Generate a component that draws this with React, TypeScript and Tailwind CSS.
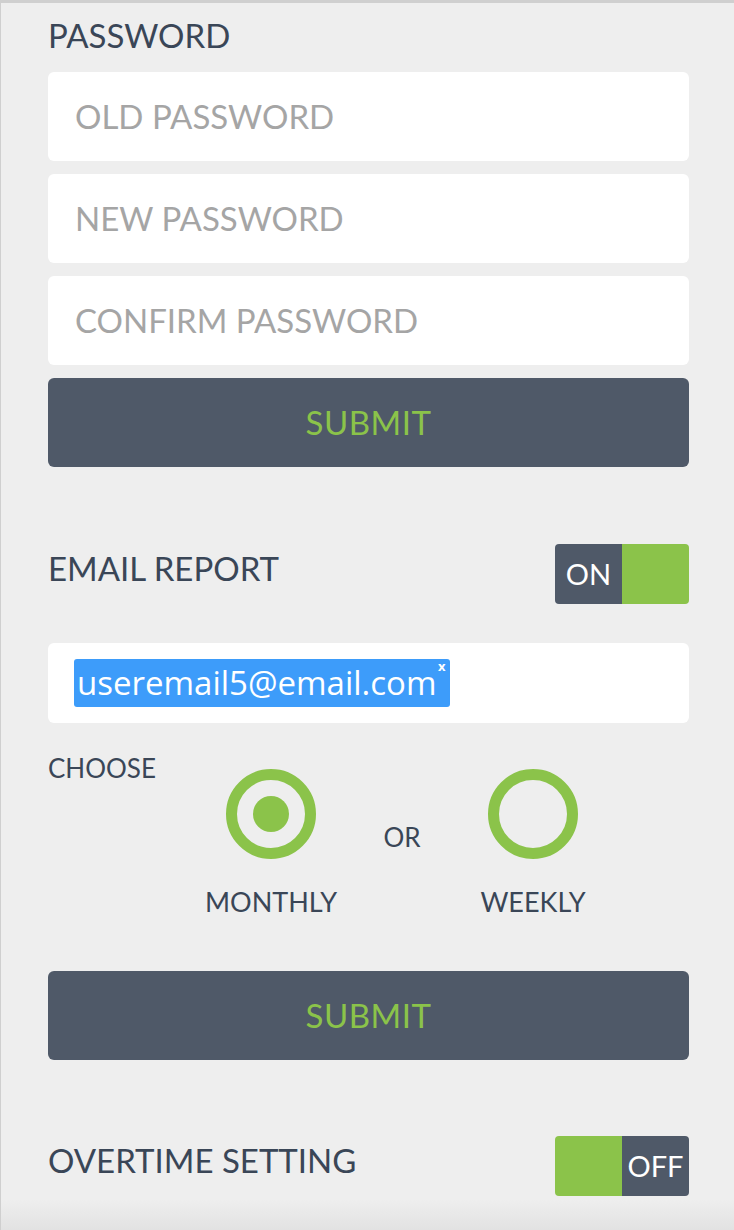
const label = "font-['Lato','Open_Sans',sans-serif] text-[#3a4657] uppercase";

function Toggle({ on }: { on: boolean }) {
  return (
    <div className="flex h-[60px] w-[134px] overflow-hidden rounded-[4px]">
      {on ? (
        <>
          <div className="flex w-1/2 items-center justify-center bg-[#4f5968] font-['Lato',sans-serif] text-[29px] text-white">
            ON
          </div>
          <div className="w-1/2 bg-[#8bc34a]" />
        </>
      ) : (
        <>
          <div className="w-1/2 bg-[#8bc34a]" />
          <div className="flex w-1/2 items-center justify-center bg-[#4f5968] font-['Lato',sans-serif] text-[29px] text-white">
            OFF
          </div>
        </>
      )}
    </div>
  );
}

function Radio({ checked, text }: { checked: boolean; text: string }) {
  return (
    <div className="flex w-[186px] flex-col items-center">
      <div className="flex h-[90px] w-[90px] items-center justify-center rounded-full border-[11px] border-[#8bc34a]">
        {checked && <div className="h-[36px] w-[36px] rounded-full bg-[#8bc34a]" />}
      </div>
      <div className={`${label} mt-[26px] text-[27px] leading-[34px]`}>{text}</div>
    </div>
  );
}

function Submit() {
  return (
    <button className="flex h-[89px] w-full items-center justify-center rounded-[6px] bg-[#4f5968] font-['Lato',sans-serif] text-[33px] tracking-[0.5px] text-[#8bc34a]">
      SUBMIT
    </button>
  );
}

export default function App() {
  const fields = ["Old password", "New password", "Confirm password"];

  return (
    <div className="flex min-h-[1230px] w-full flex-col border-t-[3px] border-l border-[#cfcfcf] bg-[#eeeeee]">
      <div className="pl-[47px] pr-[45px]">
        {/* Password */}
        <div className={`${label} mt-[12px] h-[40px] text-[33px] leading-[40px]`}>Password</div>
        <div className="mt-[17px] flex flex-col gap-[13px]">
          {fields.map((f) => (
            <div
              key={f}
              className="flex h-[89px] items-center rounded-[6px] bg-white px-[27px] font-['Lato',sans-serif] text-[33px] uppercase text-[#a5a5a5]"
            >
              {f}
            </div>
          ))}
          <Submit />
        </div>

        {/* Email report */}
        <div className="mt-[77px] flex items-center justify-between">
          <div className={`${label} -mt-[10px] text-[33px]`}>Email report</div>
          <Toggle on />
        </div>
        <div className="mt-[39px] flex h-[80px] items-center rounded-[6px] bg-white pl-[26px]">
          <div className="relative flex h-[48px] items-center rounded-[3px] bg-[#3d9cfa] pl-[3px] pr-[14px] font-['Open_Sans',sans-serif] text-[33px] text-white">
            useremail5@email.com
            <span className="absolute right-[5px] top-[1px] text-[13px] font-bold leading-none">x</span>
          </div>
        </div>

        <div className="mt-[28px] flex">
          <div className={`${label} w-[130px] text-[26px] leading-[34px]`}>Choose</div>
          <div className="mt-[18px] flex">
            <Radio checked text="Monthly" />
            <div className={`${label} flex h-[90px] w-[76px] items-end justify-center pb-[2px] text-[26px]`}>or</div>
            <Radio checked={false} text="Weekly" />
          </div>
        </div>

        <div className="mt-[52px]">
          <Submit />
        </div>

        {/* Overtime */}
        <div className="mt-[76px] flex items-center justify-between">
          <div className={`${label} -mt-[10px] text-[33px]`}>Overtime setting</div>
          <Toggle on={false} />
        </div>
      </div>
      <div className="mt-auto h-[30px] bg-gradient-to-b from-[#eeeeee] to-[#e2e2e2]" />
    </div>
  );
}
